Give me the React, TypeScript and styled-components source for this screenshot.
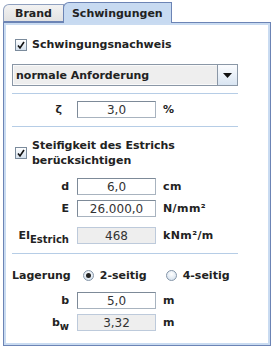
import React from "react";
import styled, { createGlobalStyle } from "styled-components";

const GlobalStyle = createGlobalStyle`
  html, body {
    margin: 0;
    padding: 0;
    background: #ffffff;
  }
  body {
    font-family: "DejaVu Sans", "Liberation Sans", sans-serif;
    font-size: 11px;
    color: #222;
  }
`;

const Screen = styled.div`
  width: 275px;
  height: 350px;
  padding: 2px 0 0 3px;
  box-sizing: border-box;
`;

const TabBar = styled.div`
  display: flex;
  align-items: flex-end;
  height: 20px;
  position: relative;
  z-index: 1;
`;

const Tab = styled.div<{ $active?: boolean }>`
  box-sizing: border-box;
  height: ${(p) => (p.$active ? "21px" : "18px")};
  margin-bottom: ${(p) => (p.$active ? "-1px" : "0")};
  padding: 0 ${(p) => (p.$active ? "8px" : "11px")};
  display: flex;
  align-items: center;
  font-weight: bold;
  font-size: 11px;
  color: #222;
  border: 1px solid ${(p) => (p.$active ? "#6c84b5" : "#8fa0bf")};
  border-bottom: ${(p) => (p.$active ? "none" : "1px solid #6c84b5")};
  border-top-left-radius: 6px 6px;
  background: ${(p) =>
    p.$active ? "#c7daf1" : "linear-gradient(#f2f2f2, #e2e2e2)"};
  margin-left: ${(p) => (p.$active ? "-1px" : "0")};
`;

const Panel = styled.div`
  box-sizing: border-box;
  width: 268px;
  height: 324px;
  border: 1px solid #6c84b5;
  box-shadow: inset 0 0 0 2px #c9dbf1;
  padding: 14px 0 0 8px;
`;

const Column = styled.div`
  width: 226px;
  display: flex;
  flex-direction: column;
`;

const CheckRow = styled.label<{ $mt?: number }>`
  display: flex;
  align-items: flex-start;
  gap: 5px;
  margin-top: ${(p) => p.$mt ?? 0}px;
  margin-left: 3px;
  font-weight: bold;
  line-height: 15px;
`;

const Box = styled.span<{ $mt?: number }>`
  flex: none;
  width: 12px;
  height: 12px;
  margin-top: ${(p) => p.$mt ?? 2}px;
  box-sizing: border-box;
  border: 1px solid #7b8b9c;
  background: linear-gradient(#ffffff, #d5e1ee);
  display: flex;
  align-items: center;
  justify-content: center;
`;

const Check = ({ mt }: { mt?: number }) => (
  <Box $mt={mt}>
    <svg width="10" height="10" viewBox="0 0 10 10">
      <path d="M2 5.5 L4 8 L8 2" fill="none" stroke="#111" strokeWidth="1.6" />
    </svg>
  </Box>
);

const Select = styled.div`
  margin-top: 12px;
  height: 22px;
  box-sizing: border-box;
  border: 1px solid #8a97a6;
  background: #eeeeee;
  display: flex;
  align-items: stretch;
`;

const SelectText = styled.div`
  flex: 1;
  padding-left: 2px;
  display: flex;
  align-items: center;
  font-weight: bold;
  border: 1px solid #fafafa;
  border-right: none;
`;

const SelectButton = styled.div`
  width: 19px;
  border-left: 1px solid #8a97a6;
  background: linear-gradient(#fbfcfe, #d9e5f2);
  display: flex;
  align-items: center;
  justify-content: center;
`;

const Separator = styled.div<{ $mt: number }>`
  height: 1px;
  background: #b6cde6;
  margin-top: ${(p) => p.$mt}px;
`;

const FieldRow = styled.div<{ $mt: number }>`
  display: flex;
  align-items: center;
  margin-top: ${(p) => p.$mt}px;
`;

const Label = styled.div<{ $w: number }>`
  width: ${(p) => p.$w}px;
  text-align: right;
  font-weight: bold;
  margin-right: ${(p) => 65 - p.$w}px;
  white-space: nowrap;
`;

const Sub = styled.sub`
  font-size: 10px;
  vertical-align: -4px;
  line-height: 0;
`;

const Field = styled.div<{ $readOnly?: boolean }>`
  width: 79px;
  height: 17px;
  box-sizing: border-box;
  display: flex;
  align-items: center;
  justify-content: center;
  font-size: 12px;
  color: #333;
  background: ${(p) => (p.$readOnly ? "#eeeeee" : "#ffffff")};
  border: 1px solid ${(p) => (p.$readOnly ? "#bdcadb" : "#7d8a98")};
  border-right-color: ${(p) => (p.$readOnly ? "#bdcadb" : "#a8b3bf")};
  border-bottom-color: ${(p) => (p.$readOnly ? "#bdcadb" : "#a8b3bf")};
`;

const Unit = styled.div`
  margin-left: 7px;
  font-weight: bold;
  letter-spacing: 0.4px;
`;

const RadioGroup = styled.div`
  display: flex;
  align-items: center;
  margin-top: 13px;
  font-weight: bold;
  height: 16px;
`;

const RadioItem = styled.label<{ $ml: number }>`
  display: flex;
  align-items: center;
  gap: 6px;
  margin-left: ${(p) => p.$ml}px;
`;

const Circle = styled.span<{ $on?: boolean }>`
  width: 11px;
  height: 11px;
  box-sizing: border-box;
  border-radius: 50%;
  border: 1px solid #8495a8;
  background: radial-gradient(circle at 50% 35%, #ffffff, #cddbea);
  display: flex;
  align-items: center;
  justify-content: center;
  &::after {
    content: "";
    display: ${(p) => (p.$on ? "block" : "none")};
    width: 5px;
    height: 5px;
    border-radius: 50%;
    background: #222;
  }
`;

export default function App() {
  return (
    <Screen>
      <GlobalStyle />
      <TabBar>
        <Tab>Brand</Tab>
        <Tab $active>Schwingungen</Tab>
      </TabBar>
      <Panel>
        <Column>
          <CheckRow>
            <Check />
            Schwingungsnachweis
          </CheckRow>
          <Select>
            <SelectText>normale Anforderung</SelectText>
            <SelectButton>
              <svg width="9" height="5" viewBox="0 0 9 5">
                <path d="M0 0 H9 L4.5 5 Z" fill="#111" />
              </svg>
            </SelectButton>
          </Select>
          <Separator $mt={7} />
          <FieldRow $mt={7}>
            <Label $w={50}>ζ</Label>
            <Field>3,0</Field>
            <Unit>%</Unit>
          </FieldRow>
          <Separator $mt={8} />
          <CheckRow $mt={11}>
            <Check mt={9} />
            Steifigkeit des Estrichs
            <br />
            berücksichtigen
          </CheckRow>
          <FieldRow $mt={10}>
            <Label $w={57}>d</Label>
            <Field>6,0</Field>
            <Unit>cm</Unit>
          </FieldRow>
          <FieldRow $mt={5}>
            <Label $w={57}>E</Label>
            <Field>26.000,0</Field>
            <Unit>N/mm²</Unit>
          </FieldRow>
          <FieldRow $mt={10}>
            <Label $w={57}>
              EI<Sub>Estrich</Sub>
            </Label>
            <Field $readOnly>468</Field>
            <Unit>kNm²/m</Unit>
          </FieldRow>
          <Separator $mt={9} />
          <RadioGroup>
            <span>Lagerung</span>
            <RadioItem $ml={12}>
              <Circle $on />
              2-seitig
            </RadioItem>
            <RadioItem $ml={19}>
              <Circle />
              4-seitig
            </RadioItem>
          </RadioGroup>
          <FieldRow $mt={9}>
            <Label $w={57}>b</Label>
            <Field>5,0</Field>
            <Unit>m</Unit>
          </FieldRow>
          <FieldRow $mt={5}>
            <Label $w={57}>
              b<Sub>w</Sub>
            </Label>
            <Field $readOnly>3,32</Field>
            <Unit>m</Unit>
          </FieldRow>
        </Column>
      </Panel>
    </Screen>
  );
}
